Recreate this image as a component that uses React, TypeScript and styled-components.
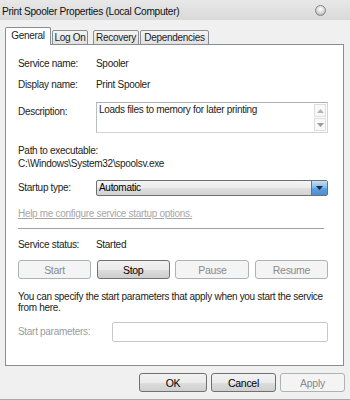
import styled, { createGlobalStyle } from "styled-components";

const GlobalStyle = createGlobalStyle`
  html, body {
    margin: 0;
    padding: 0;
    background: #f0f0f0;
  }
  body {
    font-family: "Liberation Sans", Arial, sans-serif;
    font-size: 10px;
    letter-spacing: -0.3px;
    color: #222;
  }
  * {
    box-sizing: border-box;
  }
`;

const Window = styled.div`
  width: 350px;
  height: 400px;
  display: flex;
  flex-direction: column;
  background: #f0f0f0;
  border-bottom: 1px solid #a9a9a9;
`;

const TitleBar = styled.div`
  height: 20px;
  display: flex;
  align-items: center;
  padding-left: 2px;
  background: linear-gradient(to bottom, #e8e8e8, #d9d9d9);
`;

const Title = styled.span`
  font-size: 10.2px;
  color: #111;
  padding-top: 3px;
`;

const CloseDot = styled.span`
  margin-left: auto;
  margin-right: 24px;
  width: 11px;
  height: 11px;
  border-radius: 50%;
  border: 1px solid #858585;
  background: radial-gradient(circle at 50% 35%, #ffffff 0%, #d4d4d4 55%, #9c9c9c 100%);
`;

const Body = styled.div`
  padding: 8px 0 0 5px;
`;

const TabStrip = styled.div`
  display: flex;
  align-items: flex-end;
  height: 17px;
  margin-bottom: -1px;
  position: relative;
  z-index: 1;
`;

const Tab = styled.div<{ $active?: boolean; $w: number; $ml?: number }>`
  width: ${({ $w }) => $w}px;
  margin-left: ${({ $ml }) => $ml ?? 0}px;
  height: ${({ $active }) => ($active ? 18 : 15)}px;
  display: flex;
  align-items: center;
  justify-content: center;
  border: 1px solid #898c95;
  border-bottom: ${({ $active }) => ($active ? "none" : "1px solid #898c95")};
  border-radius: 2px 2px 0 0;
  background: ${({ $active }) =>
    $active ? "#ffffff" : "linear-gradient(to bottom, #f4f4f4, #e0e0e0)"};
  color: #1c1c1c;
  padding-bottom: ${({ $active }) => ($active ? 3 : 0)}px;
`;

const Panel = styled.div`
  width: 339px;
  height: 322px;
  background: #ffffff;
  border: 1px solid #898c95;
  padding: 13px 15px 0 12px;
  display: flex;
  flex-direction: column;
`;

const Row = styled.div<{ $mt: number; $label?: number }>`
  margin-top: ${({ $mt }) => $mt}px;
  display: grid;
  grid-template-columns: ${({ $label }) => $label ?? 78}px 1fr;
  align-items: center;
  line-height: 12px;
`;

const Label = styled.span<{ $muted?: boolean; $top?: number }>`
  color: ${({ $muted }) => ($muted ? "#9b9b9b" : "#222")};
  align-self: ${({ $top }) => ($top !== undefined ? "start" : "center")};
  padding-top: ${({ $top }) => $top ?? 0}px;
`;

const TextArea = styled.div`
  height: 31px;
  display: flex;
  border: 1px solid #d0d4db;
  border-top-color: #abadb3;
  border-left-color: #b8bcc3;
  background: #fff;
`;

const TextAreaText = styled.div`
  flex: 1;
  padding: 1px 2px;
`;

const ScrollCol = styled.div`
  width: 13px;
  display: flex;
  flex-direction: column;
  gap: 1px;
  padding: 1px 1px 1px 0;
`;

const ScrollBtn = styled.div`
  flex: 1;
  display: flex;
  align-items: center;
  justify-content: center;
  border: 1px solid #dedede;
  background: #f8f8f8;
`;

const Block = styled.div<{ $mt: number }>`
  margin-top: ${({ $mt }) => $mt}px;
  line-height: 13px;
`;

const Combo = styled.div`
  height: 16px;
  display: flex;
  border: 1px solid #707070;
  border-radius: 2px;
  background: linear-gradient(to bottom, #f4f4f4 0%, #ececec 50%, #dfdfdf 51%, #d2d2d2 100%);
  overflow: hidden;
`;

const ComboText = styled.span`
  flex: 1;
  padding-left: 2px;
  line-height: 14px;
  color: #000;
`;

const ComboArrow = styled.span`
  width: 16px;
  display: flex;
  align-items: center;
  justify-content: center;
  border-left: 1px solid #3c7fb1;
  background: linear-gradient(to bottom, #c4e0f6 0%, #86bbe9 45%, #5d9fdf 55%, #4a8fd6 100%);
`;

const HelpLink = styled.div<{ $mt: number }>`
  margin-top: ${({ $mt }) => $mt}px;
  line-height: 12px;
  color: #a6a6a6;
  text-decoration: underline;
`;

const Separator = styled.div<{ $mt: number }>`
  margin-top: ${({ $mt }) => $mt}px;
  height: 1px;
  width: 306px;
  background: #a0a0a0;
`;

const ButtonGrid = styled.div<{ $mt: number }>`
  margin-top: ${({ $mt }) => $mt}px;
  display: grid;
  grid-template-columns: 73px 73px 74px 73px;
  column-gap: 5px;
  justify-content: space-between;
`;

const Button = styled.div<{ $disabled?: boolean; $w?: number }>`
  height: 19px;
  width: ${({ $w }) => ($w ? `${$w}px` : "auto")};
  display: flex;
  align-items: center;
  justify-content: center;
  border-radius: 3px;
  border: 1px solid ${({ $disabled }) => ($disabled ? "#adb2b5" : "#707070")};
  background: ${({ $disabled }) =>
    $disabled
      ? "#f4f4f4"
      : "linear-gradient(to bottom, #f2f2f2 0%, #ebebeb 50%, #dddddd 51%, #cfcfcf 100%)"};
  color: ${({ $disabled }) => ($disabled ? "#8a8a8a" : "#000")};
  font-size: 10.5px;
`;

const Paragraph = styled.p<{ $mt: number }>`
  margin: ${({ $mt }) => $mt}px 0 0;
  line-height: 11px;
  width: 310px;
`;

const Input = styled.div`
  height: 20px;
  border: 1px solid #c9c9c9;
  border-radius: 2px;
  background: #fff;
`;

const Footer = styled.div`
  display: flex;
  justify-content: flex-end;
  gap: 4px;
  margin-top: 7px;
  padding-right: 5px;
`;

const Triangle = ({ up, color }: { up?: boolean; color: string }) => (
  <svg width="7" height="4" viewBox="0 0 7 4">
    <polygon points={up ? "0,4 7,4 3.5,0" : "0,0 7,0 3.5,4"} fill={color} />
  </svg>
);

export default function App() {
  return (
    <>
      <GlobalStyle />
      <Window>
        <TitleBar>
          <Title>Print Spooler Properties (Local Computer)</Title>
          <CloseDot />
        </TitleBar>
        <Body>
          <TabStrip>
            <Tab $active $w={46}>General</Tab>
            <Tab $w={36} $ml={1}>Log On</Tab>
            <Tab $w={46} $ml={5}>Recovery</Tab>
            <Tab $w={69} $ml={1}>Dependencies</Tab>
          </TabStrip>
          <Panel>
            <Row $mt={0}>
              <Label>Service name:</Label>
              <span>Spooler</span>
            </Row>
            <Row $mt={9}>
              <Label>Display name:</Label>
              <span>Print Spooler</span>
            </Row>
            <Row $mt={11}>
              <Label $top={4}>Description:</Label>
              <TextArea>
                <TextAreaText>Loads files to memory for later printing</TextAreaText>
                <ScrollCol>
                  <ScrollBtn>
                    <Triangle up color="#b4b4b4" />
                  </ScrollBtn>
                  <ScrollBtn>
                    <Triangle color="#9a9a9a" />
                  </ScrollBtn>
                </ScrollCol>
              </TextArea>
            </Row>
            <Block $mt={11}>
              <div>Path to executable:</div>
              <div>C:\Windows\System32\spoolsv.exe</div>
            </Block>
            <Row $mt={10}>
              <Label>Startup type:</Label>
              <Combo>
                <ComboText>Automatic</ComboText>
                <ComboArrow>
                  <Triangle color="#1b2a3a" />
                </ComboArrow>
              </Combo>
            </Row>
            <HelpLink $mt={12}>Help me configure service startup options.</HelpLink>
            <Separator $mt={8} />
            <Row $mt={10}>
              <Label>Service status:</Label>
              <span>Started</span>
            </Row>
            <ButtonGrid $mt={9}>
              <Button $disabled>Start</Button>
              <Button>Stop</Button>
              <Button $disabled>Pause</Button>
              <Button $disabled>Resume</Button>
            </ButtonGrid>
            <Paragraph $mt={12}>
              You can specify the start parameters that apply when you start the service from here.
            </Paragraph>
            <Row $mt={9} $label={94}>
              <Label $muted>Start parameters:</Label>
              <Input />
            </Row>
          </Panel>
          <Footer>
            <Button $w={68}>OK</Button>
            <Button $w={65}>Cancel</Button>
            <Button $w={65} $disabled>Apply</Button>
          </Footer>
        </Body>
      </Window>
    </>
  );
}
